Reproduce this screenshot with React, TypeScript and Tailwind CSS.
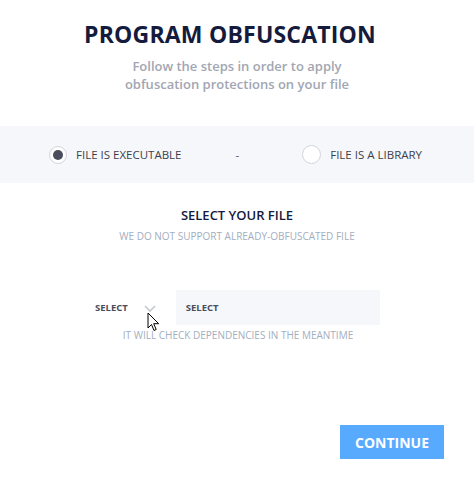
import React, { useState } from "react";

export default function App() {
  const [kind, setKind] = useState<"exe" | "lib">("exe");

  return (
    <div
      className="relative w-[474px] h-[484px] bg-white overflow-hidden"
      style={{ fontFamily: '"Open Sans", "Noto Sans", sans-serif' }}
    >
      <div className="flex flex-col items-center pt-[19px]">
        <h1 className="mr-[14px] text-[23px] leading-[30px] font-bold text-[#151b3d] tracking-[0.2px]">
          PROGRAM OBFUSCATION
        </h1>
        <p className="mt-[8px] text-center text-[13px] leading-[18px] font-semibold text-[#a2a6b2]">
          Follow the steps in order to apply
          <br />
          obfuscation protections on your file
        </p>
      </div>

      <div className="mt-[33px] h-[57px] bg-[#f6f7fb] flex items-center text-[11.5px] text-[#3b3f4e]">
        <label
          className="ml-[49px] flex items-center gap-[9px] cursor-pointer"
          onClick={() => setKind("exe")}
        >
          <span className="w-[18px] h-[18px] rounded-full border border-[#d3d5dc] bg-white flex items-center justify-center">
            {kind === "exe" && <span className="w-[10px] h-[10px] rounded-full bg-[#4a4d5c]" />}
          </span>
          <span>FILE IS EXECUTABLE</span>
        </label>
        <span className="ml-[54px] text-[#555]">-</span>
        <label
          className="ml-[63px] flex items-center gap-[9px] cursor-pointer"
          onClick={() => setKind("lib")}
        >
          <span className="w-[19px] h-[19px] rounded-full border border-[#d3d5dc] bg-white flex items-center justify-center">
            {kind === "lib" && <span className="w-[10px] h-[10px] rounded-full bg-[#4a4d5c]" />}
          </span>
          <span>FILE IS A LIBRARY</span>
        </label>
      </div>

      <div className="flex flex-col items-center mt-[23px]">
        <h2 className="text-[13px] leading-[18px] font-semibold text-[#151b3d]">SELECT YOUR FILE</h2>
        <p className="mt-[5px] text-[10px] leading-[14px] text-[#a3aec0]">
          WE DO NOT SUPPORT ALREADY-OBFUSCATED FILE
        </p>
      </div>

      <div className="mt-[47px] flex items-center">
        <div className="ml-[95px] flex items-center pt-[2px]">
          <span className="text-[9.5px] font-bold text-[#4a4d5c]">SELECT</span>
          <svg className="ml-[16px]" width="12" height="8" viewBox="0 0 12 8">
            <path d="M1 1l5 5 5-5" fill="none" stroke="#c4c8d0" strokeWidth="1.6" />
          </svg>
        </div>
        <div className="ml-[20px] w-[204px] h-[35px] bg-[#f6f7fb] flex items-center pl-[10px] pt-[2px]">
          <span className="text-[9.5px] font-bold text-[#4a4d5c]">SELECT</span>
        </div>
      </div>
      <p className="mt-[3px] text-center text-[10px] leading-[14px] text-[#a3aec0] pl-[2px]">
        IT WILL CHECK DEPENDENCIES IN THE MEANTIME
      </p>

      <div className="flex justify-end pr-[30px] mt-[83px]">
        <button className="w-[104px] h-[34px] bg-[#58aaff] text-white text-[14px] font-bold">
          CONTINUE
        </button>
      </div>

      <svg
        className="absolute left-[147px] top-[312px]"
        width="13"
        height="20"
        viewBox="0 0 13 20"
      >
        <path
          d="M1 1v15l3.5-3.5 2.5 6 2.2-1-2.5-5.8h5z"
          fill="white"
          stroke="black"
          strokeWidth="1"
          strokeLinejoin="round"
        />
      </svg>
    </div>
  );
}
